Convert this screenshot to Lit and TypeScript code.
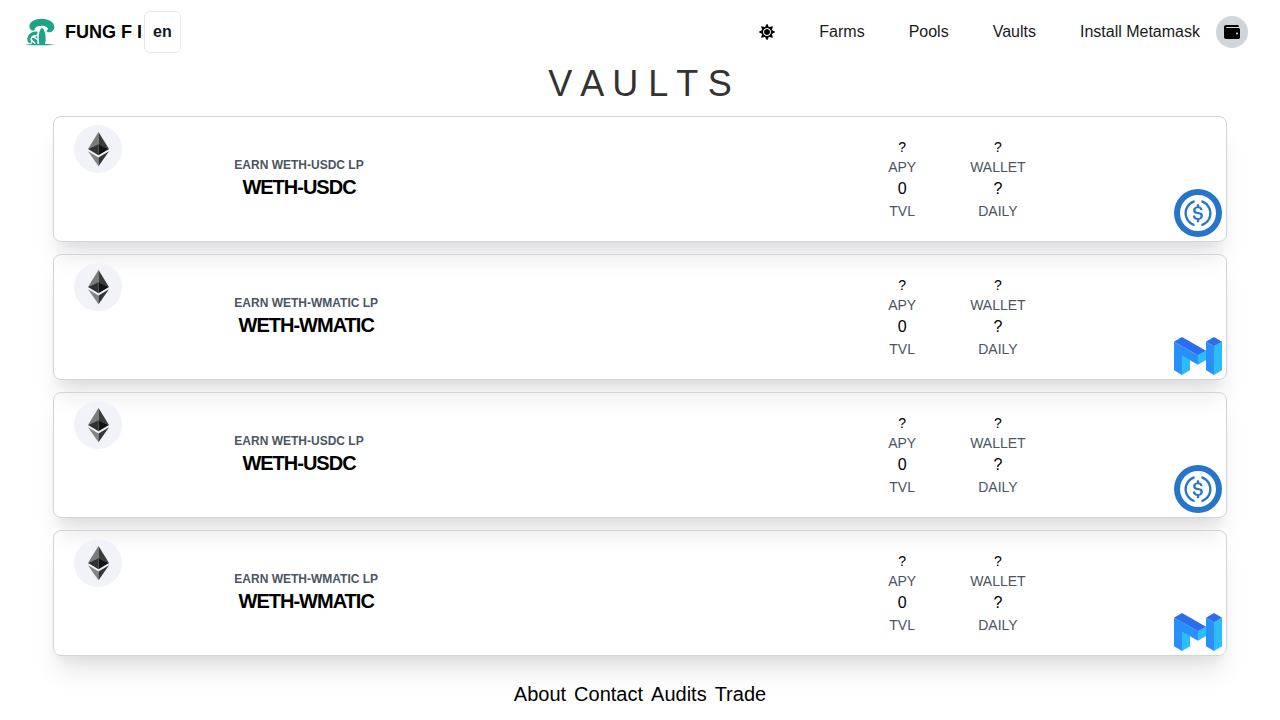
import { LitElement, html, css, svg } from "lit";
import { customElement, property } from "lit/decorators.js";

type Coin = "usdc" | "matic";

interface Vault {
  pair: string;
  coin: Coin;
}

const VAULTS: Vault[] = [
  { pair: "WETH-USDC", coin: "usdc" },
  { pair: "WETH-WMATIC", coin: "matic" },
  { pair: "WETH-USDC", coin: "usdc" },
  { pair: "WETH-WMATIC", coin: "matic" },
];

const ethIcon = html`<svg class="eth" viewBox="0 0 48 48" role="img" aria-label="WETH">
  <circle cx="24" cy="24" r="24" fill="#f2f3f8" />
  <path fill="#7b7b7b" d="M24.5 7 14 24l10.500-4.500z" />
  <path fill="#3a3b3b" d="M24.500 7 35 24l-10.500-4.500z" />
  <path fill="#303131" d="M14 24l10.500-4.700v11z" />
  <path fill="#131313" d="M35 24l-10.500-4.700v11z" />
  <path fill="#828384" d="M14 26.200l10.500 6.300v8.700z" />
  <path fill="#343535" d="M35 26.200l-10.500 6.300v8.700z" />
</svg>`;

const usdcIcon = html`<svg class="coin" viewBox="0 0 48 48" role="img" aria-label="USDC">
  <circle cx="24" cy="24" r="24" fill="#2775ca" />
  <circle cx="24" cy="24" r="18" fill="#fff" />
  <g fill="#2775ca" transform="translate(6 6) scale(0.018)">
    <path d="M1275 1158.330c0-145.830-87.500-195.830-262.500-216.660-125-16.670-150-50-150-108.340s41.670-95.830 125-95.830c75 0 116.670 25 137.500 87.500 4.170 12.500 16.670 20.830 29.170 20.830h66.660c16.670 0 29.170-12.500 29.170-29.160v-4.170c-16.670-91.670-91.670-162.500-187.500-170.830v-100c0-16.670-12.500-29.170-33.330-33.340h-62.500c-16.670 0-29.170 12.500-33.340 33.340v95.830c-125 16.670-204.160 100-204.160 204.170 0 137.500 83.330 191.660 258.330 212.500 116.670 20.830 154.170 45.830 154.170 112.500s-58.340 112.500-137.500 112.500c-108.340 0-145.840-45.840-158.340-108.340-4.160-16.660-16.660-25-29.160-25h-70.840c-16.660 0-29.160 12.500-29.160 29.170v4.170c16.660 104.160 83.330 179.160 220.830 200v100c0 16.660 12.500 29.160 33.330 33.330h62.500c16.670 0 29.170-12.500 33.340-33.330v-100c125-20.840 208.330-108.340 208.330-220.840z" />
    <path d="M787.500 1595.830c-325-116.660-491.670-479.160-370.830-800 62.500-175 200-308.330 370.830-370.830 16.670-8.330 25-20.830 25-41.670V325c0-16.670-8.330-29.170-25-33.330-4.170 0-12.500 0-16.670 4.160-395.830 125-612.500 545.840-487.500 941.670 75 233.330 254.170 412.500 487.500 487.500 16.670 8.330 33.340 0 37.500-16.670 4.170-4.160 4.170-8.330 4.170-16.660v-58.340c0-12.500-12.500-29.160-25-37.500zM1229.170 295.830c-16.670-8.330-33.340 0-37.500 16.670-4.170 4.170-4.170 8.330-4.170 16.670v58.330c0 16.670 12.500 33.330 25 41.670 325 116.660 491.670 479.160 370.830 800-62.500 175-200 308.330-370.830 370.830-16.670 8.330-25 20.830-25 41.670V1700c0 16.670 8.330 29.170 25 33.330 4.170 0 12.500 0 16.670-4.160 395.830-125 612.500-545.840 487.500-941.670-75-237.500-258.340-416.670-487.500-491.670z" />
  </g>
</svg>`;

const maticIcon = html`<svg class="coin" viewBox="0 0 144 114" role="img" aria-label="WMATIC">
  <path fill="#2bbdf7" d="M24 55l24 14v31l-24 14zM72 55l24-14v28l-24 14zM120 28l24-14v86l-24 14z" />
  <path fill="#2891f9" d="M0 14l72 41v28L24 56v58L0 100zM96 14l24 14v86l-24-14z" />
  <path fill="#2b6def" d="M0 14L24 0l72 41-24 14zM96 14l24-14 24 14-24 14z" />
</svg>`;

const mushroom = svg`
  <path d="M16 31C16 17 33 8 54 8s37 11 37 25c0 9-7 16-16 16-5 0-8-2-7-5 10-7-1-15-15-15-11 0-19 4-20 8-1 6-2 7-6 7-6 0-11-6-11-13z"/>
  <path d="M54 35c7 5 11 19 11 32 0 8-1 14-3 19H47c-2-5-3-11-3-19 0-13 3-27 10-32z"/>
  <path d="M40 47C24 43 10 56 10 70c0 7 3 11 8 12 3-1 4-4 2-8-3-9 6-18 14-17l4-1c2-2 3-5 2-9z"/>
  <path d="M23 67c4-3 10-1 17 6v12h-5c1-6-10-10-12-18z"/>
  <path d="M33 63c3-2 5-2 7-2v7zM24 79c4 0 6 3 7 6h-9z"/>
  <path d="M1 86q47-6 93 0-46 3-93 0z"/>
`;

@customElement("vault-card")
class VaultCard extends LitElement {
  @property() pair = "";
  @property() coin: Coin = "usdc";

  static styles = css`
    :host {
      display: block;
    }
    .card {
      display: flex;
      align-items: center;
      box-sizing: border-box;
      min-height: 126px;
      padding: 4px;
      border: 1px solid #d1d5db;
      border-radius: 8px;
      box-shadow: 0 20px 25px -5px rgba(0, 0, 0, 0.1), 0 10px 10px -5px rgba(0, 0, 0, 0.04);
    }
    .eth {
      align-self: flex-start;
      flex: none;
      width: 48px;
      height: 48px;
      margin: 4px 0 0 16px;
    }
    .name {
      margin-left: 112px;
      text-align: center;
    }
    .earn {
      margin: 0;
      font-size: 12px;
      line-height: 16px;
      font-weight: 700;
      color: #4b5563;
    }
    .pair {
      margin: 0;
      font-size: 20px;
      line-height: 28px;
      font-weight: 700;
      letter-spacing: -0.05em;
      color: #000;
    }
    .stats {
      display: flex;
      gap: 54px;
      margin-left: auto;
      margin-right: 148px;
      text-align: center;
      font-size: 14px;
      line-height: 20px;
    }
    .stats p {
      margin: 0;
    }
    .stats .label {
      color: #4b5563;
    }
    .stats .large {
      font-size: 16px;
      line-height: 24px;
    }
    .coin {
      align-self: flex-end;
      flex: none;
      width: 48px;
    }
  `;

  render() {
    return html`<article class="card">
      ${ethIcon}
      <div class="name">
        <p class="earn">EARN ${this.pair} LP</p>
        <h2 class="pair">${this.pair}</h2>
      </div>
      <div class="stats">
        <div>
          <p>?</p>
          <p class="label">APY</p>
          <p class="large">0</p>
          <p class="label">TVL</p>
        </div>
        <div>
          <p>?</p>
          <p class="label">WALLET</p>
          <p class="large">?</p>
          <p class="label">DAILY</p>
        </div>
      </div>
      ${this.coin === "usdc" ? usdcIcon : maticIcon}
    </article>`;
  }
}

@customElement("app-root")
class AppRoot extends LitElement {
  static styles = css`
    :host {
      display: block;
      font-family: "Liberation Sans", Arial, sans-serif;
      font-size: 16px;
      line-height: 24px;
      color: #000;
    }
    a {
      color: inherit;
      text-decoration: none;
    }
    button {
      font: inherit;
      color: inherit;
      cursor: pointer;
    }
    .header {
      display: flex;
      align-items: center;
      justify-content: space-between;
      height: 64px;
      padding: 0 32px 0 24px;
    }
    .start,
    .brand,
    .end,
    .nav {
      display: flex;
      align-items: center;
    }
    .start {
      gap: 2px;
    }
    .brand {
      gap: 9px;
      font-size: 18px;
      line-height: 28px;
      font-weight: 700;
    }
    .logo {
      width: 32px;
      height: 32px;
      fill: #1da486;
    }
    .lang {
      padding: 8px;
      border: 1px solid #e5e7eb;
      border-radius: 6px;
      background: #fff;
      color: #111827;
      font-weight: 700;
    }
    .end {
      gap: 16px;
    }
    .nav {
      gap: 44px;
      color: #1a1a1a;
    }
    .theme {
      display: flex;
      padding: 0;
      border: 0;
      background: none;
      color: #000;
    }
    .glyph {
      width: 16px;
      height: 16px;
      fill: currentColor;
    }
    .wallet {
      display: grid;
      place-items: center;
      width: 32px;
      height: 32px;
      padding: 0;
      border: 0;
      border-radius: 50%;
      background: #d1d5db;
      color: #000;
    }
    .title {
      margin: 0 0 12px;
      font-size: 36px;
      line-height: 40px;
      font-weight: 400;
      text-align: center;
      color: #333;
    }
    .list {
      display: grid;
      gap: 12px;
      padding: 0 calc(100% / 24);
    }
    .footer {
      display: flex;
      justify-content: center;
      gap: 8px;
      padding: 24px 0 12px;
      font-size: 20px;
      line-height: 28px;
    }
  `;

  render() {
    return html`
      <header class="header">
        <div class="start">
          <a class="brand" href="#">
            <svg class="logo" viewBox="0 0 96 96" aria-hidden="true">${mushroom}</svg>
            <span>FUNG F I</span>
          </a>
          <button class="lang" type="button">en</button>
        </div>
        <div class="end">
          <nav class="nav">
            <button class="theme" type="button" aria-label="Toggle theme">
              <svg class="glyph" viewBox="0 0 512 512" aria-hidden="true">
                <path d="M256 160c-52.900 0-96 43.100-96 96s43.100 96 96 96 96-43.100 96-96-43.100-96-96-96zm246.400 80.500l-94.700-47.300 33.500-100.400c4.500-13.600-8.400-26.500-21.900-21.900l-100.400 33.500-47.400-94.800c-6.400-12.800-24.600-12.800-31 0l-47.300 94.700L92.700 70.800c-13.600-4.500-26.500 8.400-21.900 21.900l33.500 100.400-94.700 47.400c-12.800 6.400-12.800 24.600 0 31l94.700 47.300-33.500 100.500c-4.500 13.600 8.400 26.500 21.900 21.900l100.400-33.500 47.300 94.700c6.400 12.800 24.600 12.800 31 0l47.300-94.700 100.400 33.500c13.600 4.500 26.500-8.400 21.900-21.900l-33.500-100.400 94.700-47.300c13-6.500 13-24.700.2-31.100zm-155.900 106c-49.900 49.900-131.100 49.900-181 0-49.900-49.900-49.900-131.100 0-181 49.900-49.900 131.100-49.900 181 0 49.900 49.900 49.900 131.100 0 181z" />
              </svg>
            </button>
            <a href="#farms">Farms</a>
            <a href="#pools">Pools</a>
            <a href="#vaults">Vaults</a>
            <a href="#metamask">Install Metamask</a>
          </nav>
          <button class="wallet" type="button" aria-label="Wallet">
            <svg class="glyph" viewBox="0 0 512 512" aria-hidden="true">
              <path d="M461.200 128H80c-8.840 0-16-7.160-16-16s7.160-16 16-16h384c8.840 0 16-7.160 16-16 0-26.510-21.490-48-48-48H64C28.650 32 0 60.650 0 96v320c0 35.350 28.650 64 64 64h397.200c28.020 0 50.800-21.530 50.800-48V176c0-26.470-22.780-48-50.800-48zM416 336c-17.670 0-32-14.330-32-32s14.330-32 32-32 32 14.330 32 32-14.330 32-32 32z" />
            </svg>
          </button>
        </div>
      </header>
      <main>
        <h1 class="title">V A U L T S</h1>
        <div class="list">
          ${VAULTS.map((v) => html`<vault-card .pair=${v.pair} .coin=${v.coin}></vault-card>`)}
        </div>
      </main>
      <footer class="footer">
        <a href="#about">About</a>
        <a href="#contact">Contact</a>
        <a href="#audits">Audits</a>
        <a href="#trade">Trade</a>
      </footer>
    `;
  }
}
